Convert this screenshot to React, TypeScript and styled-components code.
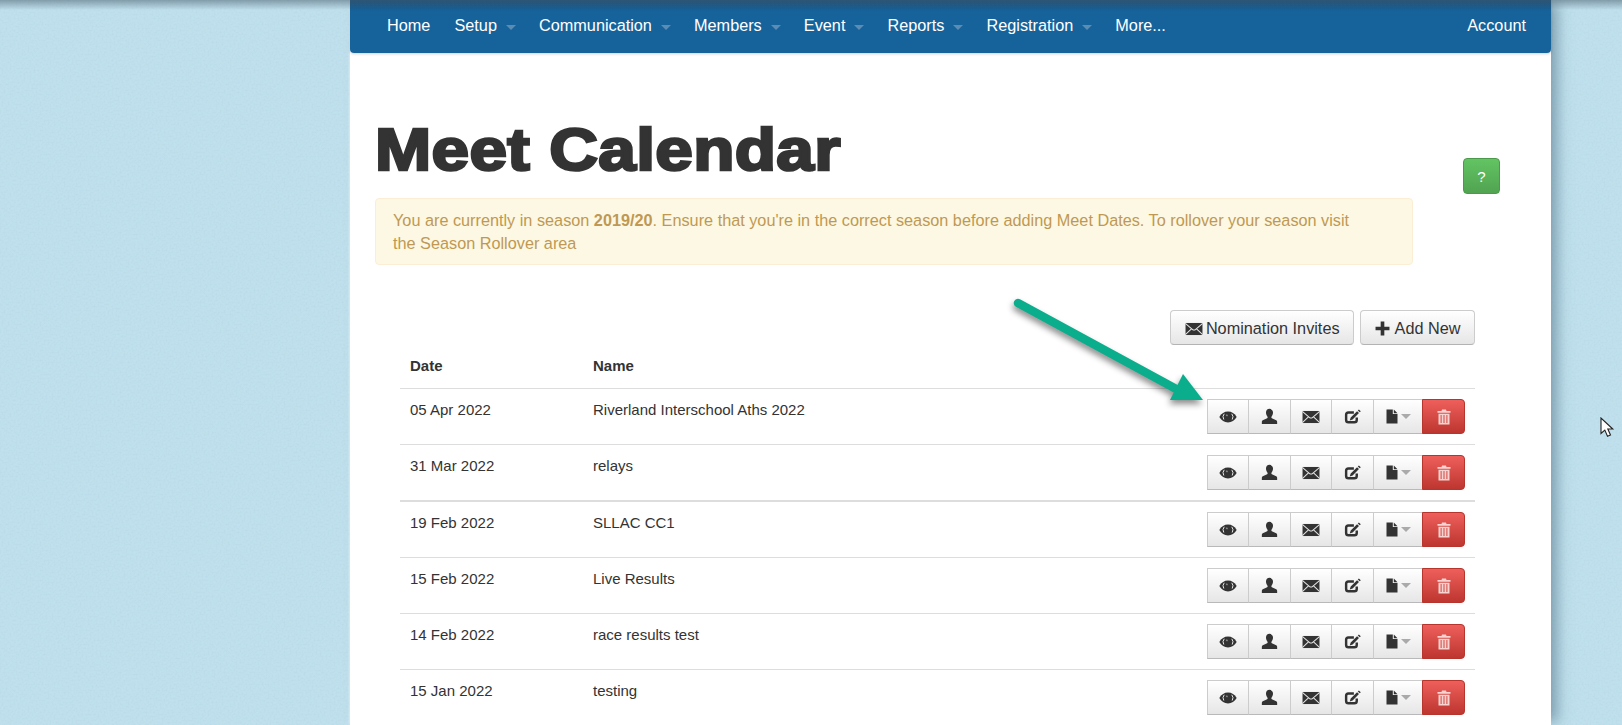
import React from 'react';
import styled, { createGlobalStyle } from 'styled-components';

const noise = encodeURIComponent(
  `<svg xmlns="http://www.w3.org/2000/svg" width="220" height="220"><filter id="n"><feTurbulence type="fractalNoise" baseFrequency="0.5" numOctaves="3" stitchTiles="stitch"/><feColorMatrix values="0 0 0 0 0.48 0 0 0 0 0.68 0 0 0 0 0.8 1.2 0 0 0 -0.42"/></filter><rect width="220" height="220" filter="url(#n)"/></svg>`
);

const GlobalStyle = createGlobalStyle`
  html, body {
    margin: 0;
    height: 725px;
    overflow: hidden;
    font-family: "Liberation Sans", Arial, sans-serif;
    font-size: 15px;
    line-height: 23px;
    color: #333;
    background-color: #bfe0ec;
    background-image: url("data:image/svg+xml,${noise}");
  }
`;

const TopShade = styled.div`
  position: absolute;
  top: 0;
  left: 0;
  right: 0;
  height: 10px;
  background: linear-gradient(to bottom, rgba(70, 90, 105, 0.5), rgba(70, 90, 105, 0));
`;

const Page = styled.div`
  position: relative;
  width: 1201px;
  height: 725px;
  margin-left: 350px;
  background: #fff;
  box-shadow: 9px 0 13px -3px rgba(70, 105, 125, 0.55), -1px 0 2px rgba(255, 255, 255, 0.5);
`;

const NavBar = styled.nav`
  display: flex;
  align-items: center;
  height: 53px;
  padding: 0 25px 2px 37px;
  box-sizing: border-box;
  background: linear-gradient(to bottom, #15507f 0, #16639c 12px, #16639c 100%);
  border-radius: 0 0 4px 4px;
  box-shadow: 0 1px 3px rgba(0, 0, 0, 0.18);
  position: relative;
`;

const NavItem = styled.a`
  display: flex;
  align-items: center;
  margin-right: 24.1px;
  color: #fff;
  font-size: 16.25px;
  white-space: nowrap;
`;

const NavCaret = styled.span`
  width: 0;
  height: 0;
  margin: 3px -1px 0 9px;
  border-left: 5px solid transparent;
  border-right: 5px solid transparent;
  border-top: 5px solid #5a8cb4;
`;

const NavAccount = styled(NavItem)`
  margin: 0 0 0 auto;
`;

const Main = styled.main`
  padding: 0 25px;
`;

const TitleRow = styled.div`
  display: flex;
  align-items: flex-start;
  justify-content: space-between;
`;

const TitleColumn = styled.div`
  width: 1038px;
`;

const Title = styled.h1`
  margin: 56px 0 8px;
  height: 81px;
  font-size: 60px;
  line-height: 81px;
  font-weight: 700;
  letter-spacing: 0.3px;
  color: #333;
  -webkit-text-stroke: 2.6px #333;
  white-space: nowrap;
  transform: scaleX(1.125);
  transform-origin: left center;
`;

const Alert = styled.div`
  box-sizing: border-box;
  height: 67px;
  padding: 10px 60px 10px 17px;
  background: #fcf8e3;
  border: 1px solid #fbeed5;
  border-radius: 4px;
  color: #c09853;
  font-size: 16.25px;
`;

const HelpButton = styled.button`
  width: 37px;
  height: 36px;
  margin: 105px 26px 0 0;
  padding: 0;
  color: #fff;
  font: 15px "Liberation Sans", Arial, sans-serif;
  background: linear-gradient(to bottom, #62c462, #51a351);
  border: 1px solid #4b994b;
  border-radius: 4px;
`;

const TableArea = styled.section`
  margin: 45px 0 0 25px;
  width: 1075px;
`;

const Toolbar = styled.div`
  display: flex;
  justify-content: flex-end;
  gap: 6px;
`;

const ToolButton = styled.button<{ $gap: number }>`
  display: flex;
  align-items: center;
  gap: ${({ $gap }) => $gap}px;
  box-sizing: border-box;
  height: 35px;
  padding: 2px 13.5px 0 13.5px;
  font: 16.25px "Liberation Sans", Arial, sans-serif;
  color: #333;
  background: linear-gradient(to bottom, #fff, #e6e6e6);
  border: 1px solid #ccc;
  border-bottom-color: #b3b3b3;
  border-radius: 4px;
`;

const Table = styled.table`
  width: 100%;
  border-collapse: collapse;
`;

const HeadCell = styled.th`
  padding: 9px 10px 11px;
  text-align: left;
  font-weight: 700;
  line-height: 23px;
`;

const Row = styled.tr<{ $thick?: boolean }>`
  border-top: ${({ $thick }) => ($thick ? '2px' : '1px')} solid #ddd;
`;

const Cell = styled.td<{ $width?: number }>`
  padding: 9px 10px 11px;
  vertical-align: top;
  line-height: 23px;
  width: ${({ $width }) => ($width ? `${$width}px` : 'auto')};
`;

const ActionCell = styled(Cell)`
  padding: 10px 10px 10px 0;
`;

const ActionGroup = styled.div`
  display: flex;
  justify-content: flex-end;
`;

const ActionButton = styled.button<{ $width: number }>`
  display: flex;
  align-items: center;
  justify-content: center;
  gap: 3px;
  box-sizing: border-box;
  width: ${({ $width }) => $width}px;
  height: 35px;
  margin-left: -1px;
  padding: 0;
  background: linear-gradient(to bottom, #fff, #e6e6e6);
  border: 1px solid #ccc;
  border-bottom-color: #b9b9b9;
`;

const DeleteButton = styled(ActionButton)`
  background: linear-gradient(to bottom, #ee5f5b, #bd362f);
  border: 1px solid #b8352e;
  border-radius: 0 4px 4px 0;
`;

const FileCaret = styled.span`
  width: 0;
  height: 0;
  border-left: 5px solid transparent;
  border-right: 5px solid transparent;
  border-top: 5px solid #aaa;
`;

const ArrowMark = styled.svg`
  position: absolute;
  left: 1000px;
  top: 290px;
  filter: drop-shadow(-1px 4px 3px rgba(0, 0, 0, 0.45));
`;

const CursorMark = styled.svg`
  position: absolute;
  left: 1600px;
  top: 417px;
`;

const Glyph = styled.svg`
  display: block;
  flex: none;
`;

type IconProps = { fill?: string };

const EyeIcon = ({ fill = '#333' }: IconProps) => (
  <Glyph width="18" height="14" viewBox="0 0 18 14">
    <path
      fill={fill}
      d="M.3 7C2.300 3.500 5.400 1.600 9 1.600s6.700 1.900 8.700 5.400c-2 3.500-5.100 5.400-8.700 5.400S2.300 10.500.3 7z"
    />
    <path
      fill="none"
      stroke="#e6e6e6"
      strokeWidth="1"
      d="M4.800 9.500A5 5 0 0 1 5.200 3.800M12.800 3.800A5 5 0 0 1 13.200 9.500"
    />
    <path fill="#8a8a8a" d="M6.800 4.800a1.200 1.200 0 0 1 2 1.100 1.200 1.200 0 0 1-2-1.100z" />
  </Glyph>
);

const UserIcon = ({ fill = '#333' }: IconProps) => (
  <Glyph width="17" height="17" viewBox="0 0 16 16">
    <path
      fill={fill}
      d="M8 .8c2 0 3.300 1.500 3.300 3.500 0 1.500-.6 3-1.400 3.900-.3.4-.2 1.100.3 1.400l3.600 1.700c.9.4 1.400 1 1.400 1.900V15H.8v-1.800c0-.9.5-1.500 1.400-1.900l3.600-1.700c.5-.3.6-1 .3-1.400-.8-.9-1.400-2.400-1.400-3.900C4.700 2.300 6 .8 8 .8z"
    />
  </Glyph>
);

const MailIcon = ({ fill = '#333' }: IconProps) => (
  <Glyph width="18" height="14" viewBox="0 0 17 13">
    <path fill={fill} d="M.5.800h16v11.400H.5z" />
    <path
      fill="none"
      stroke="#e4e4e4"
      strokeWidth="1"
      d="M.3 1.200l6.600 5.600c.9.800 2.300.8 3.200 0l6.600-5.600M.3 11.900l5.800-5.600M16.700 11.900l-5.800-5.600"
    />
  </Glyph>
);

const EditIcon = ({ fill = '#333' }: IconProps) => (
  <Glyph width="17" height="17" viewBox="0 0 16 16">
    <path
      fill="none"
      stroke={fill}
      strokeWidth="2.300"
      d="M12 9v2.200c0 1.300-.9 2.200-2.200 2.200H4.200C2.900 13.400 2 12.500 2 11.200V6.400c0-1.300.9-2.200 2.200-2.200h5.100"
    />
    <path fill={fill} d="M12.300 3l1.800 1.800-6 6-2.700.9.900-2.700zM13 2.300l1-1 1.800 1.800-1 1z" />
  </Glyph>
);

const FileIcon = ({ fill = '#333' }: IconProps) => (
  <Glyph width="12" height="15" viewBox="0 0 12 15">
    <path fill={fill} d="M.5.500h6.300v4.600h4.700v9.400H.5zM7.800.500l3.700 3.700H7.800z" />
  </Glyph>
);

const TrashIcon = ({ fill = '#f6d3d1' }: IconProps) => (
  <Glyph width="14" height="16" viewBox="0 0 14 16">
    <path
      fill={fill}
      fillRule="evenodd"
      d="M5 .5h4l.5 1.500H13.500v1.700H.5V2H4.500zM1.500 4.700h11V15.500h-11zM3.600 6v8h1V6zm2.900 0v8h1V6zm2.900 0v8h1V6z"
    />
  </Glyph>
);

const PlusIcon = ({ fill = '#333' }: IconProps) => (
  <Glyph width="15" height="15" viewBox="0 0 14 14">
    <path fill={fill} d="M5.300.5h3.400v4.800h4.800v3.400H8.700v4.800H5.300V8.700H.5V5.300h4.800z" />
  </Glyph>
);

const NAV_ITEMS = [
  { label: 'Home' },
  { label: 'Setup', caret: true },
  { label: 'Communication', caret: true },
  { label: 'Members', caret: true },
  { label: 'Event', caret: true },
  { label: 'Reports', caret: true },
  { label: 'Registration', caret: true },
  { label: 'More...' },
];

const MEETS = [
  { date: '05 Apr 2022', name: 'Riverland Interschool Aths 2022' },
  { date: '31 Mar 2022', name: 'relays' },
  { date: '19 Feb 2022', name: 'SLLAC CC1', thick: true },
  { date: '15 Feb 2022', name: 'Live Results' },
  { date: '14 Feb 2022', name: 'race results test' },
  { date: '15 Jan 2022', name: 'testing' },
];

const App = () => (
  <>
    <GlobalStyle />
    <Page>
      <NavBar>
        {NAV_ITEMS.map((item) => (
          <NavItem key={item.label}>
            {item.label}
            {item.caret && <NavCaret />}
          </NavItem>
        ))}
        <NavAccount>Account</NavAccount>
      </NavBar>
      <Main>
        <TitleRow>
          <TitleColumn>
            <Title>Meet Calendar</Title>
            <Alert>
              You are currently in season <b>2019/20</b>. Ensure that you're in the correct season
              before adding Meet Dates. To rollover your season visit the Season Rollover area
            </Alert>
          </TitleColumn>
          <HelpButton>?</HelpButton>
        </TitleRow>
        <TableArea>
          <Toolbar>
            <ToolButton $gap={3}>
              <MailIcon />
              Nomination Invites
            </ToolButton>
            <ToolButton $gap={5}>
              <PlusIcon />
              Add New
            </ToolButton>
          </Toolbar>
          <Table>
            <thead>
              <tr>
                <HeadCell>Date</HeadCell>
                <HeadCell>Name</HeadCell>
                <HeadCell />
              </tr>
            </thead>
            <tbody>
              {MEETS.map((meet) => (
                <Row key={meet.date} $thick={meet.thick}>
                  <Cell $width={163}>{meet.date}</Cell>
                  <Cell>{meet.name}</Cell>
                  <ActionCell $width={270}>
                    <ActionGroup>
                      <ActionButton $width={42}>
                        <EyeIcon />
                      </ActionButton>
                      <ActionButton $width={43}>
                        <UserIcon />
                      </ActionButton>
                      <ActionButton $width={42}>
                        <MailIcon />
                      </ActionButton>
                      <ActionButton $width={43}>
                        <EditIcon />
                      </ActionButton>
                      <ActionButton $width={50}>
                        <FileIcon />
                        <FileCaret />
                      </ActionButton>
                      <DeleteButton $width={43}>
                        <TrashIcon />
                      </DeleteButton>
                    </ActionGroup>
                  </ActionCell>
                </Row>
              ))}
            </tbody>
          </Table>
        </TableArea>
      </Main>
    </Page>
    <TopShade />
    <ArrowMark width="220" height="125" viewBox="0 0 220 125">
      <path d="M18 13L178 100" stroke="#0aae8c" strokeWidth="8.500" strokeLinecap="round" fill="none" />
      <path d="M183 84L203 110L170 110z" fill="#0aae8c" />
    </ArrowMark>
    <CursorMark width="16" height="22" viewBox="0 0 16 22">
      <path
        d="M1 1v15.500l3.800-3.400 2.700 6.200 3-1.300-2.700-6h5z"
        fill="#fff"
        stroke="#222"
        strokeWidth="1.100"
      />
    </CursorMark>
  </>
);

export default App;
